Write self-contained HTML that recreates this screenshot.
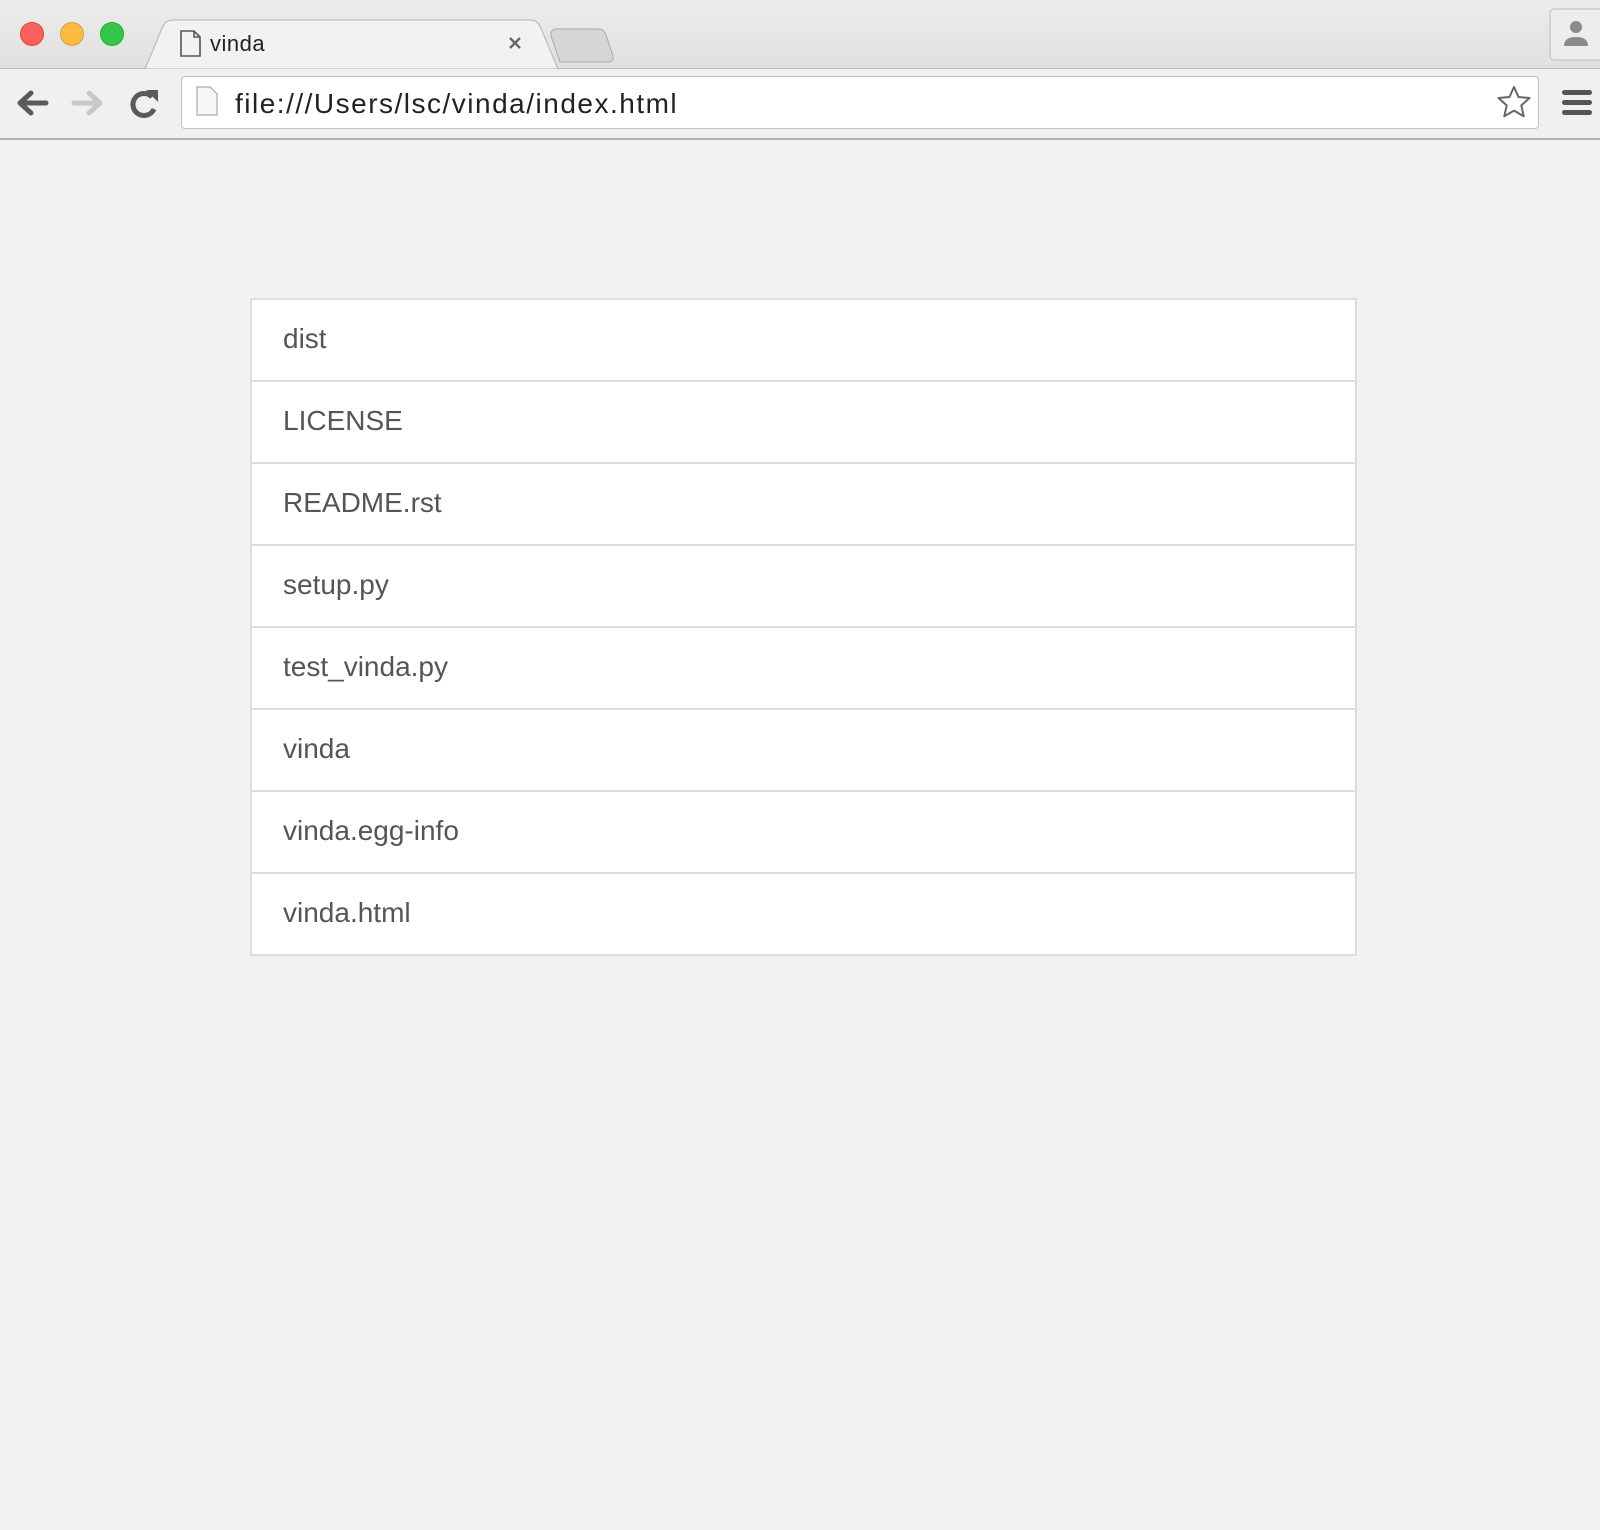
<!DOCTYPE html>
<html><head><meta charset="utf-8"><style>
*{margin:0;padding:0;box-sizing:border-box}
html,body{width:1600px;height:1530px;overflow:hidden;background:#f1f2f4;font-family:"Liberation Sans",sans-serif}
.top{position:absolute;left:0;top:0;width:1600px;height:69px;background:linear-gradient(#ececec,#e0e0e0);border-bottom:1px solid #b8b8b8}
.dot{position:absolute;top:22px;width:24px;height:24px;border-radius:50%}
.tool{position:absolute;left:0;top:69px;width:1600px;height:71px;background:#f0f0f0;border-bottom:2px solid #b4b4b4}
.addr{position:absolute;left:181px;top:76px;width:1358px;height:53px;background:#fff;border:1px solid #c2c2c2;border-radius:4px}
.list{position:absolute;left:250px;top:298px;width:1107px;background:#fff;border:2px solid #dddddd;border-bottom:none}
.row{height:82px;border-bottom:2px solid #dddddd;padding-left:31px;font-size:28px;color:#555;line-height:78px}
</style></head><body>
<div class="top">
 <div class="dot" style="left:20px;background:#fc605c;border:1px solid #e0443e"></div>
 <div class="dot" style="left:60px;background:#fdbc40;border:1px solid #dea236"></div>
 <div class="dot" style="left:100px;background:#34c84a;border:1px solid #27aa35"></div>
 <svg style="position:absolute;left:0;top:0" width="1600" height="70">
  <path d="M145 69 L163 26 Q166 20 173 20 L530 20 Q537 20 540 26 L558 69 Z" fill="#f2f2f2" stroke="#b4b4b4" stroke-width="1"/>
  <path d="M560 62 L551 36 Q550 29 557 29 L598 29 Q604 29 606 35 L613 56 Q614 62 607 62 Z" fill="#d6d6d6" stroke="#aaa"/>
  <path d="M181 31 h13 l6 6 v19 h-19 z M194 31 v6 h6" fill="none" stroke="#555" stroke-width="1.6"/>
  <path d="M510 38 l10 10 M520 38 l-10 10" stroke="#666" stroke-width="2.4"/>
  <rect x="1550" y="9" width="56" height="51" rx="4" fill="#ececec" stroke="#bbb"/>
  <circle cx="1576" cy="27" r="6" fill="#8a8a8a"/>
  <path d="M1564 46 q0 -9 12 -9 q12 0 12 9 z" fill="#8a8a8a"/>
 </svg>
 <div style="position:absolute;left:210px;top:31px;font-size:22px;color:#222;letter-spacing:0.5px">vinda</div>
</div>
<div class="tool">
 <svg style="position:absolute;left:0;top:0" width="1600" height="70">
  <path d="M46 34 H22 M31 24 L20 34 L31 44" fill="none" stroke="#5a5a5a" stroke-width="5" stroke-linecap="round" stroke-linejoin="round"/>
  <path d="M74 34 H98 M89 24 L100 34 L89 44" fill="none" stroke="#c8c8c8" stroke-width="5" stroke-linecap="round" stroke-linejoin="round"/>
  <path d="M152 28 A11 11 0 1 0 154 40" fill="none" stroke="#5a5a5a" stroke-width="5"/>
  <path d="M146 21 L158 21 L158 33 Z" fill="#5a5a5a"/>
  <rect x="1562" y="21" width="30" height="5" rx="2.5" fill="#555"/>
  <rect x="1562" y="31" width="30" height="5" rx="2.5" fill="#555"/>
  <rect x="1562" y="41" width="30" height="5" rx="2.5" fill="#555"/>
 </svg>
</div>
<div class="addr">
 <svg style="position:absolute;left:0;top:0" width="1358" height="53">
  <path d="M15 10 h13 l7 7 v21 h-20 z" fill="#f6f6f6" stroke="#aaa" stroke-width="1.2"/>
  <path d="M1332 10 l4.5 10 l11 1 l-8.2 7.4 l2.4 10.8 l-9.7 -5.6 l-9.7 5.6 l2.4 -10.8 l-8.2 -7.4 l11 -1 z" fill="#fff" stroke="#666" stroke-width="2" stroke-linejoin="round"/>
 </svg>
 <div style="position:absolute;left:53px;top:11px;font-size:28px;color:#222;letter-spacing:1.5px">file:///Users/lsc/vinda/index.html</div>
</div>
<div class="list">
 <div class="row">dist</div>
 <div class="row">LICENSE</div>
 <div class="row">README.rst</div>
 <div class="row">setup.py</div>
 <div class="row">test_vinda.py</div>
 <div class="row">vinda</div>
 <div class="row">vinda.egg-info</div>
 <div class="row">vinda.html</div>
</div>
</body></html>
